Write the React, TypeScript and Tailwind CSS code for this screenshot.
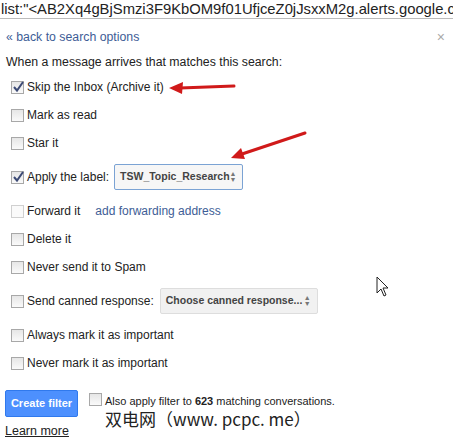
import React from "react";

// Gmail-style checkbox (old 2012 look)
function Box({ checked }: { checked?: boolean }) {
  return (
    <span className="relative inline-block w-[13px] h-[13px] border border-[#a8a8a8] bg-gradient-to-b from-[#e6e6e6] to-[#fafafa] shrink-0">
      {checked && (
        <svg className="absolute -left-[1px] -top-[2px]" width="14" height="14" viewBox="0 0 14 14">
          <path d="M3 7 L6 10.5 L12 2" fill="none" stroke="#3c4a75" strokeWidth="2" />
        </svg>
      )}
    </span>
  );
}

function Row({
  checked,
  label,
  h = "h-[28px]",
  children,
}: {
  checked?: boolean;
  label: string;
  h?: string;
  children?: React.ReactNode;
}) {
  return (
    <div className={`flex items-center pl-[11px] ${h}`}>
      <Box checked={checked} />
      <span className="ml-[3px] text-[12px] text-[#222] whitespace-nowrap">{label}</span>
      {children}
    </div>
  );
}

function Updown() {
  return (
    <span className="text-[7px] text-[#777] leading-[6px] flex flex-col">
      <span>▲</span>
      <span>▼</span>
    </span>
  );
}

function Arrows() {
  return (
    <svg className="absolute inset-0 pointer-events-none" width="453" height="442">
      <line x1="234" y1="86" x2="180" y2="88" stroke="#d01a1a" strokeWidth="3" strokeLinecap="round" />
      <path d="M169 88 L183 82 L182 94 Z" fill="#d01a1a" />
      <line x1="305" y1="133" x2="242" y2="154" stroke="#d01a1a" strokeWidth="3" strokeLinecap="round" />
      <path d="M231 158 L241 148 L245 159 Z" fill="#d01a1a" />
      {/* mouse pointer */}
      <path d="M377 277 L377 293 L381 289 L384 296 L386 295 L383 288 L388 288 Z" fill="#fff" stroke="#222" strokeWidth="1" />
    </svg>
  );
}

export default function App() {
  return (
    <div className="relative w-[453px] h-[442px] overflow-hidden bg-white font-['Liberation_Sans',Arial,sans-serif]">
      <div className="h-[19px] border-b border-[#bbb] text-[14.8px] leading-[18px] text-[#222] whitespace-nowrap overflow-hidden pl-[1px]">
        list:"&lt;AB2Xq4gBjSmzi3F9KbOM9f01UfjceZ0jJsxxM2g.alerts.google.com&gt;"
      </div>

      <div className="flex justify-between items-center pl-[6px] pr-[8px] mt-[9px] h-[18px]">
        <span className="text-[12.3px] text-[#3e5d96]">« back to search options</span>
        <span className="text-[14px] text-[#aaa] leading-none">×</span>
      </div>

      <div className="pl-[6px] mt-[7px] text-[12.3px] text-[#222] h-[18px]">
        When a message arrives that matches this search:
      </div>

      <div className="mt-[2px] flex flex-col">
        <Row checked label="Skip the Inbox (Archive it)" />
        <Row label="Mark as read" />
        <Row label="Star it" />
        <Row checked label="Apply the label:" h="h-[40px]">
          <span className="ml-[5px] flex items-center justify-between w-[129px] h-[26px] border border-[#7ba3d4] bg-[#f6f6f6] rounded-[2px] pl-[5px] pr-[6px] text-[10.5px] font-bold text-[#444] whitespace-nowrap">
            TSW_Topic_Research
            <Updown />
          </span>
        </Row>
        <div className="flex items-center pl-[11px] h-[28px]">
          <span className="inline-block w-[13px] h-[13px] border border-[#d0d0d0] bg-[#fafafa] shrink-0" />
          <span className="ml-[3px] text-[12px] text-[#222]">Forward it</span>
          <span className="ml-[15px] text-[12px] text-[#3e5d96]">add forwarding address</span>
        </div>
        <Row label="Delete it" />
        <Row label="Never send it to Spam" />
        <Row label="Send canned response:" h="h-[40px]">
          <span className="ml-[6px] flex items-center justify-between w-[158px] h-[26px] border border-[#ddd] bg-[#f1f1f1] rounded-[2px] pl-[5px] pr-[6px] text-[10.5px] font-bold text-[#444] whitespace-nowrap">
            Choose canned response...
            <Updown />
          </span>
        </Row>
        <Row label="Always mark it as important" />
        <Row label="Never mark it as important" />
      </div>

      <div className="flex pl-[5px] mt-[13px]">
        <div className="flex flex-col">
          <button className="w-[73px] h-[27px] bg-[#4d90fe] border border-[#3079ed] rounded-[2px] text-white text-[11px] font-bold">
            Create filter
          </button>
          <span className="mt-[7px] text-[12.5px] leading-[15px] text-[#222] underline">Learn more</span>
        </div>
        <div className="ml-[11px] flex flex-col">
          <div className="flex items-start mt-[3px] h-[15px]">
            <span className="inline-block w-[13px] h-[13px] border border-[#a8a8a8] bg-gradient-to-b from-[#e6e6e6] to-[#fafafa] shrink-0" />
            <span className="ml-[3px] mt-[2px] text-[11px] leading-[13px] text-[#222] whitespace-nowrap">
              Also apply filter to <b>623</b> matching conversations.
            </span>
          </div>
          <span className="ml-[16px] mt-[2px] text-[17px] leading-[18px] text-[#222] font-['Noto_Sans_CJK_SC',sans-serif] whitespace-nowrap">
            双电网（www. pcpc. me）
          </span>
        </div>
      </div>

      <Arrows />
    </div>
  );
}
